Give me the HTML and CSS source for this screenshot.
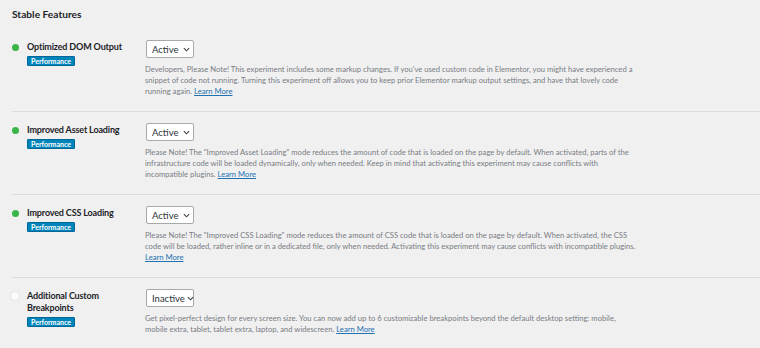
FILE: index.html
```html
<!DOCTYPE html>
<html lang="en">

<head>
    <meta charset="UTF-8">
    <title>Experiments</title>
    <link rel="stylesheet" href="styles.css">
</head>

<body>
    <h2 class="section-title">Stable Features</h2>

    <div class="feature-row">
        <div class="feature-name">
            <span class="status-dot active"></span>
            <div class="feature-label">
                <div class="feature-title">Optimized DOM Output</div>
                <span class="tag">Performance</span>
            </div>
        </div>
        <div class="feature-body">
            <div class="select"><span>Active</span><svg class="chevron" viewBox="0 0 8 5"><path d="M1 1l3 3 3-3" /></svg></div>
            <p class="description">Developers, Please Note! This experiment includes some markup changes. If you've used custom code in Elementor, you might have experienced a snippet of code not running. Turning this experiment off allows you to keep prior Elementor markup output settings, and have that lovely code running again. <a href="#">Learn More</a></p>
        </div>
    </div>

    <div class="feature-row">
        <div class="feature-name">
            <span class="status-dot active"></span>
            <div class="feature-label">
                <div class="feature-title">Improved Asset Loading</div>
                <span class="tag">Performance</span>
            </div>
        </div>
        <div class="feature-body">
            <div class="select"><span>Active</span><svg class="chevron" viewBox="0 0 8 5"><path d="M1 1l3 3 3-3" /></svg></div>
            <p class="description">Please Note! The "Improved Asset Loading" mode reduces the amount of code that is loaded on the page by default. When activated, parts of the infrastructure code will be loaded dynamically, only when needed. Keep in mind that activating this experiment may cause conflicts with incompatible plugins. <a href="#">Learn More</a></p>
        </div>
    </div>

    <div class="feature-row">
        <div class="feature-name">
            <span class="status-dot active"></span>
            <div class="feature-label">
                <div class="feature-title">Improved CSS Loading</div>
                <span class="tag">Performance</span>
            </div>
        </div>
        <div class="feature-body">
            <div class="select"><span>Active</span><svg class="chevron" viewBox="0 0 8 5"><path d="M1 1l3 3 3-3" /></svg></div>
            <p class="description">Please Note! The "Improved CSS Loading" mode reduces the amount of CSS code that is loaded on the page by default. When activated, the CSS code will be loaded, rather inline or in a dedicated file, only when needed. Activating this experiment may cause conflicts with incompatible plugins. <a href="#">Learn More</a></p>
        </div>
    </div>

    <div class="feature-row">
        <div class="feature-name">
            <span class="status-dot"></span>
            <div class="feature-label">
                <div class="feature-title">Additional Custom Breakpoints</div>
                <span class="tag">Performance</span>
            </div>
        </div>
        <div class="feature-body">
            <div class="select"><span>Inactive</span><svg class="chevron" viewBox="0 0 8 5"><path d="M1 1l3 3 3-3" /></svg></div>
            <p class="description">Get pixel-perfect design for every screen size. You can now add up to 6 customizable breakpoints beyond the default desktop setting: mobile, mobile extra, tablet, tablet extra, laptop, and widescreen. <a href="#">Learn More</a></p>
        </div>
    </div>
</body>

</html>
```

FILE: styles.css
```css
* {
    margin: 0;
    padding: 0;
    box-sizing: border-box;
}

body {
    font-family: Lato, "Noto Sans", sans-serif;
    background-color: #f0f0f1;
    color: #1d2327;
    padding-left: 12px;
    overflow: hidden;
}

.section-title {
    font-size: 10.2px;
    font-weight: 700;
    line-height: 14px;
    padding: 7px 0 7px;
}

.feature-row {
    display: flex;
    padding: 11px 0 14px;
    border-bottom: 1px solid #dcdcde;
}

.feature-row:first-of-type {
    padding-top: 12px;
}

.feature-name {
    display: flex;
    align-items: flex-start;
    width: 133px;
    flex-shrink: 0;
}

.status-dot {
    width: 8px;
    height: 8px;
    border-radius: 50%;
    background-color: #fbfbfb;
    box-shadow: 0 0 1.5px rgba(0, 0, 0, 0.18);
    margin: 3px 8px 0 -1px;
    flex-shrink: 0;
}

.status-dot.active {
    width: 7px;
    height: 7px;
    margin: 4px 8px 0 0;
    background-color: #39b54a;
    box-shadow: none;
}

.feature-label {
    display: flex;
    flex-direction: column;
    align-items: flex-start;
    gap: 3px;
}

.feature-title {
    font-size: 9px;
    font-weight: 700;
    letter-spacing: -0.15px;
    line-height: 12px;
    width: 100px;
    margin-top: 1px;
}

.tag {
    display: block;
    background-color: #0085ba;
    border: 1px solid #006799;
    color: #fff;
    font-size: 7px;
    font-weight: 700;
    line-height: 8px;
    padding: 0 3px;
    border-radius: 1px;
}

.feature-body {
    flex: 1;
}

.select {
    display: flex;
    align-items: center;
    justify-content: space-between;
    width: 48px;
    height: 18px;
    margin-left: 1px;
    padding: 0 3px 0 5px;
    background-color: #fff;
    border: 1px solid #a7aaad;
    border-radius: 2px;
    font-size: 9.5px;
    color: #2c3338;
    white-space: nowrap;
}

.chevron {
    width: 7px;
    height: 5px;
    margin-left: 2px;
    flex-shrink: 0;
    fill: none;
    stroke: #3c434a;
    stroke-width: 1.3;
}

.description {
    width: 493px;
    margin-top: 6px;
    font-size: 7.65px;
    line-height: 11px;
    color: #787c82;
}

.description a {
    color: #2271b1;
}
```
